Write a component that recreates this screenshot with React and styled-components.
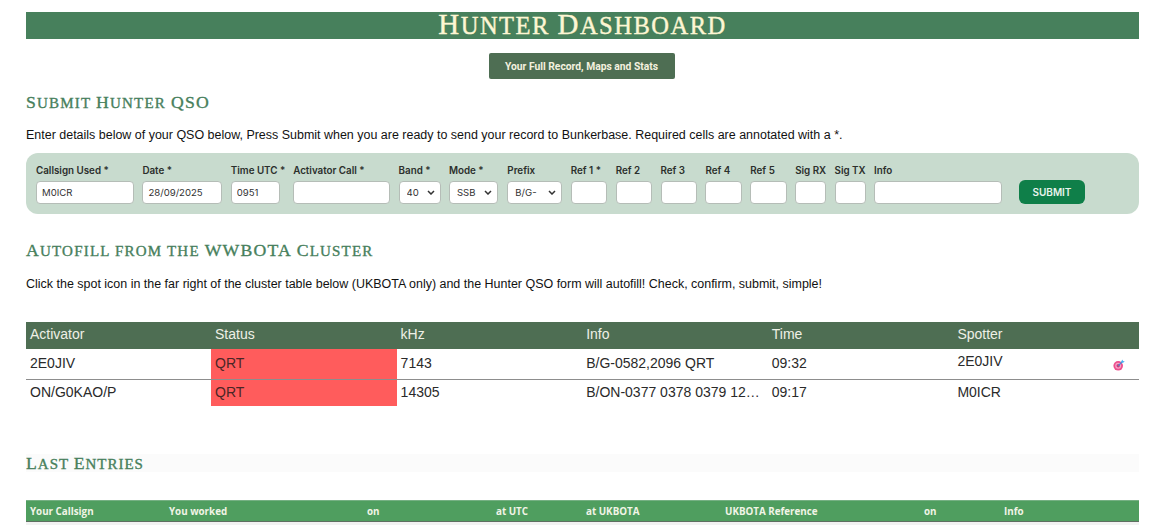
import React from 'react';
import styled, { createGlobalStyle } from 'styled-components';

const GlobalStyle = createGlobalStyle`
  html, body {
    margin: 0;
    height: 525px;
    overflow: hidden;
    background: #fff;
  }
  * { box-sizing: border-box; }
`;

const formFields = [
  { label: 'Callsign Used *', width: 98, value: 'M0ICR' },
  { label: 'Date *', width: 80, value: '28/09/2025' },
  { label: 'Time UTC *', width: 49, value: '0951', gap: 13.4 },
  { label: 'Activator Call *', width: 97 },
  { label: 'Band *', width: 42, options: '40' },
  { label: 'Mode *', width: 49, options: 'SSB', gap: 9.4 },
  { label: 'Prefix', width: 55, options: 'B/G-' },
  { label: 'Ref 1 *', width: 36.5 },
  { label: 'Ref 2', width: 36.5 },
  { label: 'Ref 3', width: 36.5 },
  { label: 'Ref 4', width: 36.5 },
  { label: 'Ref 5', width: 36.5 },
  { label: 'Sig RX', width: 31 },
  { label: 'Sig TX', width: 31 },
  { label: 'Info', width: 128 },
];

const spots = [
  { call: '2E0JIV', status: 'QRT', khz: '7143', info: 'B/G-0582,2096 QRT', time: '09:32', spotter: '2E0JIV', canSpot: true },
  { call: 'ON/G0KAO/P', status: 'QRT', khz: '14305', info: 'B/ON-0377 0378 0379 1234 1235', time: '09:17', spotter: 'M0ICR' },
];

const lastColumns = [
  ['Your Callsign', 139],
  ['You worked', 198],
  ['on', 129],
  ['at UTC', 90],
  ['at UKBOTA', 139],
  ['UKBOTA Reference', 199],
  ['on', 80],
  ['Info', 139],
];

const chevron = "url(\"data:image/svg+xml,%3Csvg xmlns='http://www.w3.org/2000/svg' width='8' height='5' viewBox='0 0 8 5'%3E%3Cpath d='M1 1l3 3 3-3' fill='none' stroke='%23333' stroke-width='1.5'/%3E%3C/svg%3E\")";

const SpotIcon = () => (
  <svg width="12" height="12" viewBox="0 0 12 12">
    <circle cx="5.2" cy="6.8" r="4.8" fill="#ee4f8e" />
    <circle cx="5.2" cy="6.8" r="3" fill="#f7a3c4" />
    <circle cx="5.2" cy="6.8" r="1.7" fill="#c2407f" />
    <path d="M5.4 6.6 L9.4 2.6" stroke="#3f8fd8" strokeWidth="1.3" />
    <path d="M8.2 2.4 L9.4 0.4 L10 2 L11.8 2.6 L10 3.8 L8.4 3.6 Z" fill="#4ab0f2" />
  </svg>
);

export default function App() {
  return (
    <Page>
      <GlobalStyle />
      <Banner><Cap>H</Cap>unter <Cap>D</Cap>ashboard</Banner>
      <ButtonRow>
        <RecordButton>Your Full Record, Maps and Stats</RecordButton>
      </ButtonRow>

      <SectionTitle><Cap>S</Cap>ubmit <Cap>H</Cap>unter <Cap>QSO</Cap></SectionTitle>
      <Intro>
        Enter details below of your QSO below, Press Submit when you are ready to send your record to Bunkerbase. Required cells are annotated with a *.
      </Intro>
      <QsoForm>
        {formFields.map(field => (
          <Field key={field.label} $width={field.width} $gap={field.gap}>
            <FieldLabel>{field.label}</FieldLabel>
            {field.options ? (
              <FieldSelect defaultValue={field.options}>
                <option>{field.options}</option>
              </FieldSelect>
            ) : (
              <FieldInput defaultValue={field.value || ''} />
            )}
          </Field>
        ))}
        <SubmitButton type="button">SUBMIT</SubmitButton>
      </QsoForm>

      <AutofillTitle><Cap>A</Cap>utofill from the <Cap>WWBOTA C</Cap>luster</AutofillTitle>
      <AutofillIntro>
        Click the spot icon in the far right of the cluster table below (UKBOTA only) and the Hunter QSO form will autofill! Check, confirm, submit, simple!
      </AutofillIntro>

      <ClusterTable>
        <thead>
          <tr>
            <ClusterHead>Activator</ClusterHead>
            <ClusterHead>Status</ClusterHead>
            <ClusterHead>kHz</ClusterHead>
            <ClusterHead>Info</ClusterHead>
            <ClusterHead>Time</ClusterHead>
            <ClusterHead>Spotter</ClusterHead>
          </tr>
        </thead>
        <tbody>
          {spots.map((spot, i) => (
            <ClusterRow key={spot.call} $last={i === spots.length - 1}>
              <ClusterCell>{spot.call}</ClusterCell>
              <StatusCell>{spot.status}</StatusCell>
              <ClusterCell>{spot.khz}</ClusterCell>
              <ClusterCell>{spot.info}</ClusterCell>
              <ClusterCell>{spot.time}</ClusterCell>
              <ClusterCell>
                <SpotterWrap $raised={spot.canSpot}>
                  {spot.spotter}
                  {spot.canSpot && <SpotLink><SpotIcon /></SpotLink>}
                </SpotterWrap>
              </ClusterCell>
            </ClusterRow>
          ))}
        </tbody>
      </ClusterTable>

      <LastTitle><Cap>L</Cap>ast <Cap>E</Cap>ntries</LastTitle>
      <LastTable>
        <colgroup>
          {lastColumns.map(([name, width], i) => <col key={i} width={width} />)}
        </colgroup>
        <thead>
          <tr>
            {lastColumns.map(([name], i) => <LastHead key={i}>{name}</LastHead>)}
          </tr>
        </thead>
        <tbody>
          <tr><LastCell colSpan={8} /></tr>
        </tbody>
      </LastTable>
    </Page>
  );
}

const Page = styled.div`
  width: 1152px;
  height: 525px;
  overflow: hidden;
  padding: 12px 13px 0 26px;
  font-family: "Liberation Sans", Arial, sans-serif;
`;

const Cap = styled.span`
  font-size: 1.18em;
`;

const Banner = styled.h1`
  margin: 0;
  height: 27px;
  background: #47805c;
  color: #fdf6d3;
  font-family: "Liberation Serif", serif;
  font-size: 24.5px;
  font-weight: 400;
  letter-spacing: 1.5px;
  line-height: 25px;
  text-align: center;
  text-transform: uppercase;
  -webkit-text-stroke: 0.4px #fdf6d3;
`;

const ButtonRow = styled.div`
  display: flex;
  justify-content: center;
  margin-top: 14px;
  padding-right: 2px;
`;

const RecordButton = styled.div`
  width: 186px;
  height: 26px;
  border-radius: 2px;
  background: #4e6e53;
  color: #f4f1df;
  font-family: "Roboto", sans-serif;
  font-size: 10.3px;
  font-weight: 700;
  line-height: 27px;
  text-align: center;
`;

const SectionTitle = styled.h2`
  margin: 12px 0 0;
  color: #47805c;
  font-family: "Liberation Serif", serif;
  font-size: 15px;
  font-weight: 400;
  letter-spacing: 1.2px;
  line-height: 22px;
  text-transform: uppercase;
  -webkit-text-stroke: 0.35px #47805c;
`;

const Intro = styled.p`
  margin: 13px 0 0;
  color: #111;
  font-size: 12.48px;
  line-height: 16px;
`;

const QsoForm = styled.form`
  display: flex;
  align-items: flex-start;
  gap: 8.4px;
  height: 61px;
  margin-top: 10px;
  padding: 11px 10px 0;
  border-radius: 12px;
  background: #c8dbce;
`;

const Field = styled.div`
  flex: none;
  width: ${props => props.$width}px;
  margin-right: ${props => (props.$gap ? props.$gap - 8.4 : 0)}px;
`;

const FieldLabel = styled.label`
  display: block;
  height: 17px;
  color: #2b2f2c;
  font-family: "Inter", sans-serif;
  font-size: 9.8px;
  font-weight: 600;
  line-height: 13px;
  white-space: nowrap;
`;

const FieldInput = styled.input`
  display: block;
  width: 100%;
  height: 23px;
  padding: 0 5px;
  border: 1px solid #b5bdb7;
  border-radius: 4px;
  background: #fff;
  color: #333;
  font-family: "Inter", sans-serif;
  font-size: 9.6px;
  outline: none;
`;

const FieldSelect = styled.select`
  display: block;
  width: 100%;
  height: 23px;
  padding: 0 0 0 7px;
  border: 1px solid #b5bdb7;
  border-radius: 4px;
  appearance: none;
  background: #fff ${chevron} no-repeat right 5px center;
  color: #333;
  font-family: "Inter", sans-serif;
  font-size: 9.6px;
`;

const SubmitButton = styled.button`
  flex: none;
  width: 66px;
  height: 24px;
  margin: 16px 0 0 8.6px;
  padding: 0;
  border: 0;
  border-radius: 6px;
  background: #0f7f49;
  color: #e8f3ec;
  font-family: "Inter", sans-serif;
  font-size: 10px;
  font-weight: 600;
`;

const AutofillTitle = styled(SectionTitle)`
  margin-top: 25px;
`;

const AutofillIntro = styled(Intro)`
  margin-top: 14px;
`;

const ClusterTable = styled.table`
  width: 100%;
  margin-top: 30px;
  border-collapse: collapse;
  table-layout: fixed;
  font-size: 14px;
`;

const ClusterHead = styled.th`
  height: 27px;
  padding: 0 4px 3px;
  background: #4e6e53;
  color: #eef0e6;
  font-weight: 400;
  text-align: left;

  &:first-child {
    width: 185px;
  }
`;

const ClusterRow = styled.tr`
  height: ${props => (props.$last ? 27 : 30)}px;
  border-bottom: ${props => (props.$last ? 'none' : '1px solid #8d8d8d')};
`;

const ClusterCell = styled.td`
  overflow: hidden;
  padding: 0 4px 2px;
  color: #2a2a2a;
  text-overflow: ellipsis;
  white-space: nowrap;
`;

const StatusCell = styled(ClusterCell)`
  background: #ff5c5c;
  color: #4a2626;
`;

const SpotterWrap = styled.div`
  position: relative;
  padding-bottom: ${props => (props.$raised ? 4 : 0)}px;
`;

const SpotLink = styled.span`
  position: absolute;
  top: 6px;
  right: 10px;
  display: block;
  width: 12px;
  height: 12px;
  line-height: 0;
`;

const LastTitle = styled.h2`
  height: 18px;
  margin: 48px 0 0;
  background: #fbfbfb;
  color: #47805c;
  font-family: "Liberation Serif", serif;
  font-size: 15px;
  font-weight: 400;
  letter-spacing: 1px;
  line-height: 18px;
  text-transform: uppercase;
  -webkit-text-stroke: 0.35px #47805c;
`;

const LastTable = styled.table`
  width: 100%;
  margin-top: 28px;
  border-collapse: collapse;
  table-layout: fixed;
`;

const LastHead = styled.th`
  height: 21px;
  padding: 0 4px;
  border-top: 1px solid #76b083;
  border-bottom: 1px solid #5f6f62;
  background: #4f9e5f;
  color: #f1f4e6;
  font-family: "Open Sans", sans-serif;
  font-size: 9.8px;
  font-weight: 700;
  text-align: left;
`;

const LastCell = styled.td`
  height: 20px;
  background: #f2f2f2;
`;
